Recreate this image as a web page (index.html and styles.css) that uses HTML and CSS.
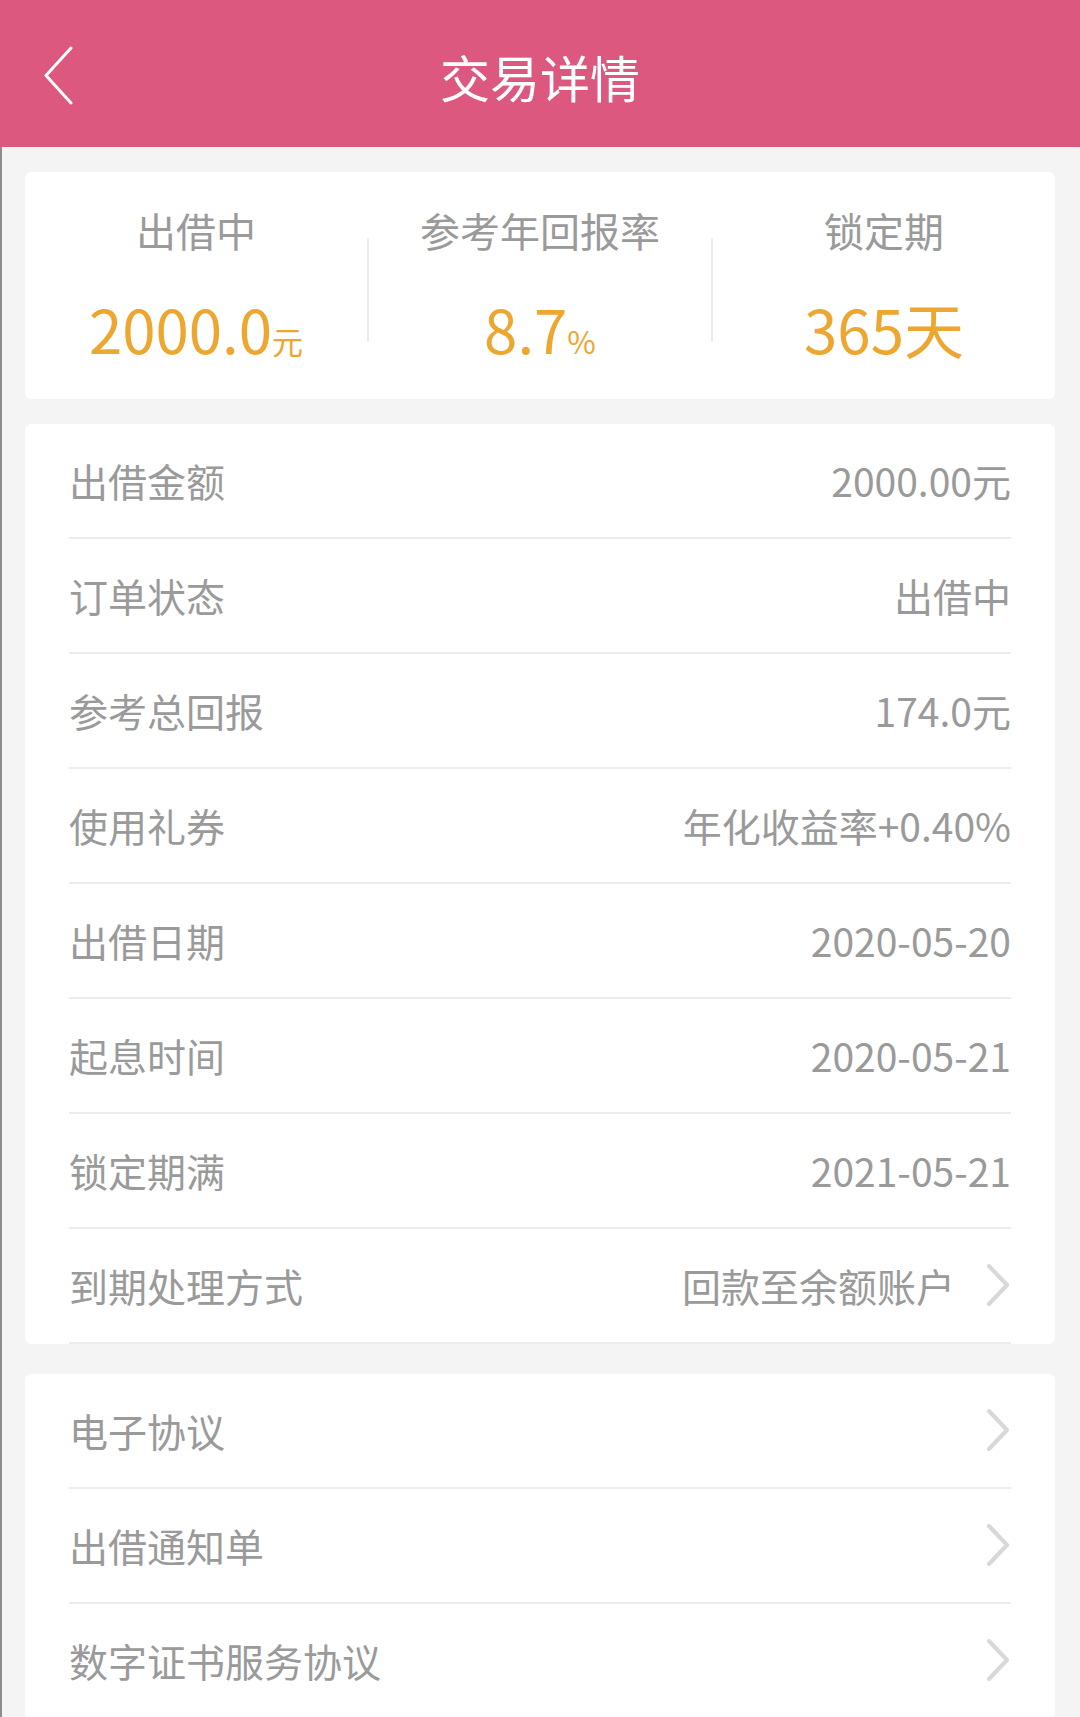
FILE: index.html
```html
<!DOCTYPE html>
<html lang="zh-CN">
<head>
  <meta charset="UTF-8" />
  <meta name="viewport" content="width=device-width, initial-scale=1.0" />
  <title>交易详情</title>
  <link rel="stylesheet" href="styles.css">
</head>
<body>
  <header class="topbar">
    <a class="back" href="#">
      <svg width="31" height="59" viewBox="0 0 31 59"><path d="M28 2 L3 29.5 L28 57" fill="none" stroke="#fff" stroke-width="3" stroke-linecap="round" stroke-linejoin="round"/></svg>
    </a>
    <h1>交易详情</h1>
    <span></span>
  </header>

  <main class="page">
    <section class="card summary">
      <div class="stat">
        <div class="stat-label">出借中</div>
        <div class="stat-value">2000.0<small>元</small></div>
      </div>
      <div class="divider"></div>
      <div class="stat">
        <div class="stat-label">参考年回报率</div>
        <div class="stat-value">8.7<small>%</small></div>
      </div>
      <div class="divider"></div>
      <div class="stat">
        <div class="stat-label">锁定期</div>
        <div class="stat-value">365天</div>
      </div>
    </section>

    <section class="card list">
      <div class="row"><span>出借金额</span><span>2000.00元</span></div>
      <div class="row"><span>订单状态</span><span>出借中</span></div>
      <div class="row"><span>参考总回报</span><span>174.0元</span></div>
      <div class="row"><span>使用礼券</span><span>年化收益率+0.40%</span></div>
      <div class="row"><span>出借日期</span><span>2020-05-20</span></div>
      <div class="row"><span>起息时间</span><span>2020-05-21</span></div>
      <div class="row"><span>锁定期满</span><span>2021-05-21</span></div>
      <a class="row" href="#">
        <span>到期处理方式</span>
        <span class="row-end">回款至余额账户
          <svg class="arrow" width="26" height="44" viewBox="0 0 26 44"><path d="M4 3 L22 22 L4 41" fill="none" stroke="#d8d8d8" stroke-width="4" stroke-linecap="round" stroke-linejoin="round"/></svg>
        </span>
      </a>
    </section>

    <section class="card list">
      <a class="row" href="#">
        <span>电子协议</span>
        <svg class="arrow" width="26" height="44" viewBox="0 0 26 44"><path d="M4 3 L22 22 L4 41" fill="none" stroke="#d8d8d8" stroke-width="4" stroke-linecap="round" stroke-linejoin="round"/></svg>
      </a>
      <a class="row" href="#">
        <span>出借通知单</span>
        <svg class="arrow" width="26" height="44" viewBox="0 0 26 44"><path d="M4 3 L22 22 L4 41" fill="none" stroke="#d8d8d8" stroke-width="4" stroke-linecap="round" stroke-linejoin="round"/></svg>
      </a>
      <a class="row" href="#">
        <span>数字证书服务协议</span>
        <svg class="arrow" width="26" height="44" viewBox="0 0 26 44"><path d="M4 3 L22 22 L4 41" fill="none" stroke="#d8d8d8" stroke-width="4" stroke-linecap="round" stroke-linejoin="round"/></svg>
      </a>
    </section>
  </main>
</body>
</html>
```

FILE: styles.css
```css
* {
  box-sizing: border-box;
}

body {
  margin: 0;
  background: #f4f4f4;
  font-family: "Noto Sans CJK SC", "Noto Sans", sans-serif;
  color: #999;
}

.topbar {
  height: 147px;
  background: #dd587e;
  display: grid;
  grid-template-columns: 1fr auto 1fr;
  align-items: center;
  padding: 4px 43px 0;
}

.back {
  display: flex;
  justify-self: start;
}

.topbar h1 {
  margin: 0;
  color: #fff;
  font-size: 50px;
  font-weight: 400;
  line-height: 1;
}

.page {
  padding: 25px 25px 0 23px;
  display: flex;
  flex-direction: column;
  gap: 25px;
  border-left: 2px solid #8c8c8c;
}

.card {
  background: #fff;
  border-radius: 6px;
}

.summary {
  height: 227px;
  display: grid;
  grid-template-columns: 1fr 2px 1fr 2px 1fr;
  align-items: start;
}

.stat {
  text-align: center;
  padding-top: 38px;
}

.stat-label {
  font-size: 40px;
  line-height: 40px;
  color: #9a9a9a;
}

.stat-value {
  margin-top: 48px;
  font-size: 60px;
  line-height: 60px;
  color: #eda630;
}

.stat-value small {
  font-size: 31px;
}

.divider {
  align-self: center;
  height: 104px;
  margin-top: 8px;
  background: #ececec;
}

.list {
  padding: 0 44px;
}

.list + .list {
  margin-top: 5px;
}

.row {
  height: 115px;
  display: flex;
  justify-content: space-between;
  align-items: center;
  padding-bottom: 2px;
  border-bottom: 2px solid #ececec;
  font-size: 39px;
  color: #9a9a9a;
  text-decoration: none;
}

.row-end {
  display: flex;
  align-items: center;
  gap: 30px;
}

.arrow {
  display: block;
  flex-shrink: 0;
}
```
